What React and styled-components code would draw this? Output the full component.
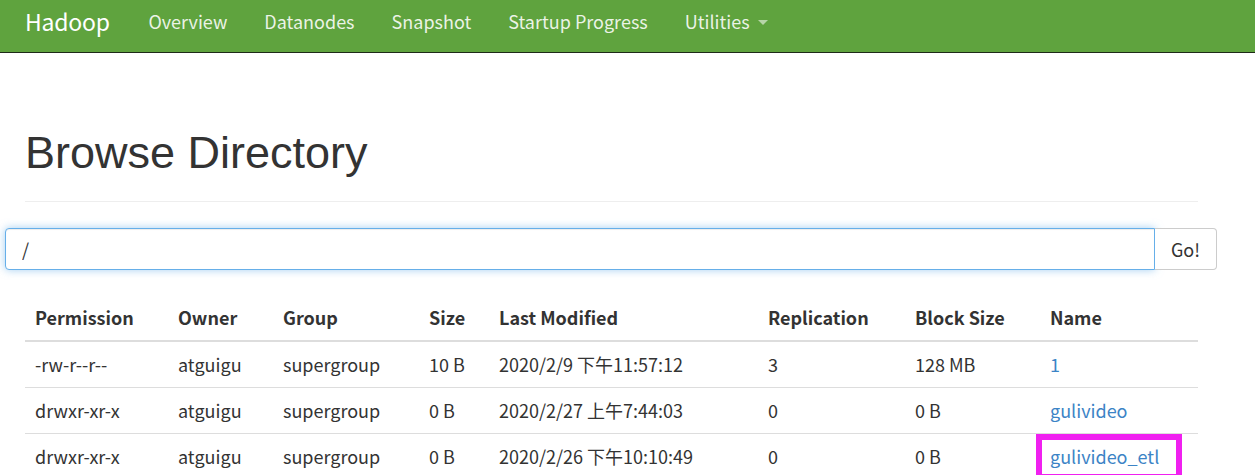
import React from 'react';
import styled, { createGlobalStyle } from 'styled-components';

const GlobalStyle = createGlobalStyle`
  html, body {
    margin: 0;
    padding: 0;
    background: #fff;
    color: #333;
    font-family: "Noto Sans CJK SC", "Noto Sans", sans-serif;
    overflow: hidden;
  }
`;

const Navbar = styled.nav`
  height: 53px;
  box-sizing: border-box;
  background: #5fa33e;
  border-bottom: 1px solid #1e2a18;
  display: flex;
  align-items: flex-start;
  padding: 6px 0 0 25px;
  line-height: 30px;
`;

const Brand = styled.div`
  font-size: 23px;
  color: #fff;
  margin-right: 20px;
  letter-spacing: -0.2px;
`;

const NavItem = styled.div`
  font-size: 18px;
  color: rgba(255, 255, 255, 0.88);
  padding: 0 18.5px;
  display: flex;
  align-items: center;
  gap: 8px;
`;

const Caret = styled.span`
  width: 0;
  height: 0;
  border-left: 5px solid transparent;
  border-right: 5px solid transparent;
  border-top: 5px solid rgba(255, 255, 255, 0.55);
  margin-top: 3px;
`;

const Page = styled.div`
  padding: 0 25px;
  width: 1173px;
`;

const PageHeader = styled.div`
  margin-top: 75px;
  padding-bottom: 23px;
  border-bottom: 1px solid #eee;
`;

const Title = styled.h1`
  margin: 0;
  font-family: "Liberation Sans", Arial, sans-serif;
  font-weight: 400;
  font-size: 45px;
  line-height: 50px;
  color: #333;
`;

const SearchRow = styled.div`
  display: flex;
  margin: 26px 0 0 -20px;
  width: 1212px;
`;

const PathInput = styled.input`
  flex: 1;
  height: 42px;
  box-sizing: border-box;
  border: 1px solid #66afe9;
  border-radius: 4px 0 0 4px;
  box-shadow: inset 0 1px 1px rgba(0, 0, 0, 0.075), 0 0 8px rgba(102, 175, 233, 0.6);
  padding: 0 16px;
  font-size: 18px;
  color: #333;
  font-family: "Noto Sans CJK SC", "Noto Sans", sans-serif;
  outline: none;
`;

const GoButton = styled.button`
  width: 62px;
  height: 42px;
  box-sizing: border-box;
  border: 1px solid #ccc;
  border-left: none;
  border-radius: 0 4px 4px 0;
  background: #fff;
  color: #333;
  font-size: 18px;
  font-family: "Noto Sans CJK SC", "Noto Sans", sans-serif;
  padding: 0;
`;

const Table = styled.table`
  margin-top: 24px;
  width: 1173px;
  border-collapse: collapse;
  table-layout: fixed;
  font-size: 18px;
`;

const Th = styled.th`
  text-align: left;
  font-weight: 700;
  height: 47px;
  padding: 0 10px;
  box-sizing: border-box;
  border-bottom: 2px solid #ddd;
  color: #333;
`;

const Td = styled.td`
  padding: 0 10px;
  height: 46px;
  box-sizing: border-box;
  border-top: 1px solid #ddd;
  color: #333;
  white-space: nowrap;
`;

const Link = styled.a`
  color: #3c84c6;
  text-decoration: none;
  position: relative;
`;

const Highlight = styled.span`
  position: absolute;
  left: -14px;
  top: -9px;
  width: 146px;
  height: 46px;
  box-sizing: border-box;
  border: 6px solid #f020f0;
  pointer-events: none;
`;

const columns = [
  ['Permission', 143],
  ['Owner', 105],
  ['Group', 146],
  ['Size', 70],
  ['Last Modified', 269],
  ['Replication', 147],
  ['Block Size', 135],
  ['Name', 158],
];

const files = [
  { perm: '-rw-r--r--', owner: 'atguigu', group: 'supergroup', size: '10 B', modified: '2020/2/9 下午11:57:12', repl: '3', block: '128 MB', name: '1' },
  { perm: 'drwxr-xr-x', owner: 'atguigu', group: 'supergroup', size: '0 B', modified: '2020/2/27 上午7:44:03', repl: '0', block: '0 B', name: 'gulivideo' },
  { perm: 'drwxr-xr-x', owner: 'atguigu', group: 'supergroup', size: '0 B', modified: '2020/2/26 下午10:10:49', repl: '0', block: '0 B', name: 'gulivideo_etl', marked: true },
];

export default function App() {
  return (
    <>
      <GlobalStyle />
      <Navbar>
        <Brand>Hadoop</Brand>
        <NavItem>Overview</NavItem>
        <NavItem>Datanodes</NavItem>
        <NavItem>Snapshot</NavItem>
        <NavItem>Startup Progress</NavItem>
        <NavItem>Utilities <Caret /></NavItem>
      </Navbar>
      <Page>
        <PageHeader>
          <Title>Browse Directory</Title>
        </PageHeader>
        <SearchRow>
          <PathInput defaultValue="/" />
          <GoButton>Go!</GoButton>
        </SearchRow>
        <Table>
          <colgroup>
            {columns.map(([label, w]) => <col key={label} style={{ width: w }} />)}
          </colgroup>
          <thead>
            <tr>
              {columns.map(([label]) => <Th key={label}>{label}</Th>)}
            </tr>
          </thead>
          <tbody>
            {files.map((f) => (
              <tr key={f.name}>
                <Td>{f.perm}</Td>
                <Td>{f.owner}</Td>
                <Td>{f.group}</Td>
                <Td>{f.size}</Td>
                <Td>{f.modified}</Td>
                <Td>{f.repl}</Td>
                <Td>{f.block}</Td>
                <Td>
                  <Link href="#">
                    {f.name}
                    {f.marked && <Highlight />}
                  </Link>
                </Td>
              </tr>
            ))}
          </tbody>
        </Table>
      </Page>
    </>
  );
}
